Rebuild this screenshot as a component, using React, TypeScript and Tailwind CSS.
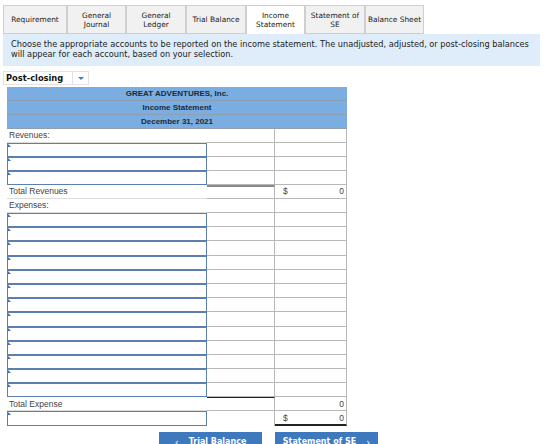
import React from "react";

const tabs = [
  { label: "Requirement", w: "w-[64px]" },
  { label: "General Journal", w: "w-[59px]", two: ["General", "Journal"] },
  { label: "General Ledger", w: "w-[60px]", two: ["General", "Ledger"] },
  { label: "Trial Balance", w: "w-[60px]" },
  { label: "Income Statement", w: "w-[59px]", two: ["Income", "Statement"], active: true },
  { label: "Statement of SE", w: "w-[60px]", two: ["Statement of", "SE"] },
  { label: "Balance Sheet", w: "w-[59px]" },
];

const InputCell = () => (
  <div className="relative h-full w-[200px] border border-[#5b7fae] bg-white">
    <span className="absolute left-0 top-0 h-0 w-0 border-l-[3px] border-t-[3px] border-l-[#3c6fb0] border-t-transparent" />
  </div>
);

const Row = ({
  first,
  second,
  third,
  h = "h-[14px]",
}: {
  first: React.ReactNode;
  second?: React.ReactNode;
  third?: React.ReactNode;
  h?: string;
}) => (
  <div className={`flex ${h}`}>
    {first}
    {second ?? <div className="h-full w-[68px] border-b border-r border-[#b8b8b8]" />}
    {third ?? <div className="h-full w-[72px] border-b border-r border-[#b8b8b8]" />}
  </div>
);

const Label = ({ text }: { text: string }) => (
  <div className="flex h-full w-[200px] items-center border-b border-[#dcdcdc] pl-[2px] text-[8.5px] text-[#444]">
    {text}
  </div>
);

const Amount = ({ dollar, value, extra = "" }: { dollar?: boolean; value: string; extra?: string }) => (
  <div className={`flex h-full w-[72px] items-center justify-between border-r border-[#b8b8b8] pl-[8px] pr-[2px] text-[8.5px] text-[#444] ${extra}`}>
    <span>{dollar ? "$" : ""}</span>
    <span>{value}</span>
  </div>
);

export default function App() {
  return (
    <div className="h-[444px] w-[560px] overflow-hidden bg-white pl-[3px] pt-[5px]" style={{ fontFamily: "'DejaVu Sans', Verdana, sans-serif" }}>
      {/* tabs */}
      <div className="flex h-[29px] items-stretch">
        {tabs.map((t) => (
          <div
            key={t.label}
            className={`${t.w} flex flex-col items-center justify-center border border-[#cfcfcf] text-center text-[7.4px] leading-[9px] text-[#222] ${
              t.active ? "border-b-0 bg-white" : "bg-[#f1f1f1]"
            }`}
          >
            {t.two ? (
              <>
                <span>{t.two[0]}</span>
                <span>{t.two[1]}</span>
              </>
            ) : (
              <span>{t.label}</span>
            )}
          </div>
        ))}
      </div>

      {/* instructions */}
      <div className="h-[32px] w-[537px] bg-[#deedf9] px-[8px] pt-[5px] text-[8.2px] leading-[10px] text-[#222]">
        Choose the appropriate accounts to be reported on the income statement. The unadjusted, adjusted, or post-closing balances
        will appear for each account, based on your selection.
      </div>

      {/* dropdown */}
      <div className="mt-[5px] flex h-[14px] w-[86px] items-center border border-[#e2e2e2] bg-white">
        <span className="flex-1 pl-[2px] text-[8.3px] font-bold text-[#111]">Post-closing</span>
        <span className="flex h-full w-[16px] items-center justify-center border-l border-[#e2e2e2]">
          <span className="h-0 w-0 border-x-[3px] border-t-[3px] border-x-transparent border-t-[#3f7fc4]" />
        </span>
      </div>

      {/* statement table */}
      <div className="ml-[4px] mt-[2px] w-[340px]" style={{ fontFamily: "'Liberation Sans', Arial, sans-serif" }}>
        {["GREAT ADVENTURES, Inc.", "Income Statement", "December 31, 2021"].map((t) => (
          <div
            key={t}
            className="flex h-[14px] items-center justify-center border-b border-[#8f9fb0] bg-[#7aaee2] text-[8px] font-bold text-[#1d2a38]"
          >
            {t}
          </div>
        ))}
        <Row first={<Label text="Revenues:" />} />
        {[0, 1, 2].map((i) => (
          <Row key={`r${i}`} first={<InputCell />} />
        ))}
        <Row
          first={<Label text="Total Revenues" />}
          second={<div className="h-full w-[68px] border-b border-r border-t-2 border-[#b8b8b8] border-t-[#8a8a8a]" />}
          third={<Amount dollar value="0" extra="border-b border-[#b8b8b8]" />}
        />
        <Row first={<Label text="Expenses:" />} />
        {Array.from({ length: 13 }).map((_, i) => (
          <Row key={`e${i}`} h="h-[14.2px]" first={<InputCell />} />
        ))}
        <Row
          first={<Label text="Total Expense" />}
          second={<div className="h-full w-[68px] border-b border-r border-t border-[#b8b8b8] border-t-[#222]" />}
          third={<Amount value="0" extra="border-b border-[#b8b8b8]" />}
        />
        <Row
          h="h-[15px]"
          first={<InputCell />}
          second={<div className="h-full w-[68px] border-r border-[#b8b8b8]" />}
          third={<Amount dollar value="0" extra="border-b-2 border-b-[#222]" />}
        />
      </div>

      {/* navigation */}
      <div className="ml-[156px] mt-[6px] flex gap-[13px]">
        <button className="flex h-[20px] w-[103px] items-center justify-center gap-[10px] bg-[#3f79bd] text-[8px] font-bold text-white">
          <span className="text-[10px] font-normal">‹</span>
          <span>Trial Balance</span>
        </button>
        <button className="flex h-[20px] w-[103px] items-center justify-center gap-[10px] bg-[#3f79bd] text-[8px] font-bold text-white">
          <span>Statement of SE</span>
          <span className="text-[10px] font-normal">›</span>
        </button>
      </div>
    </div>
  );
}
